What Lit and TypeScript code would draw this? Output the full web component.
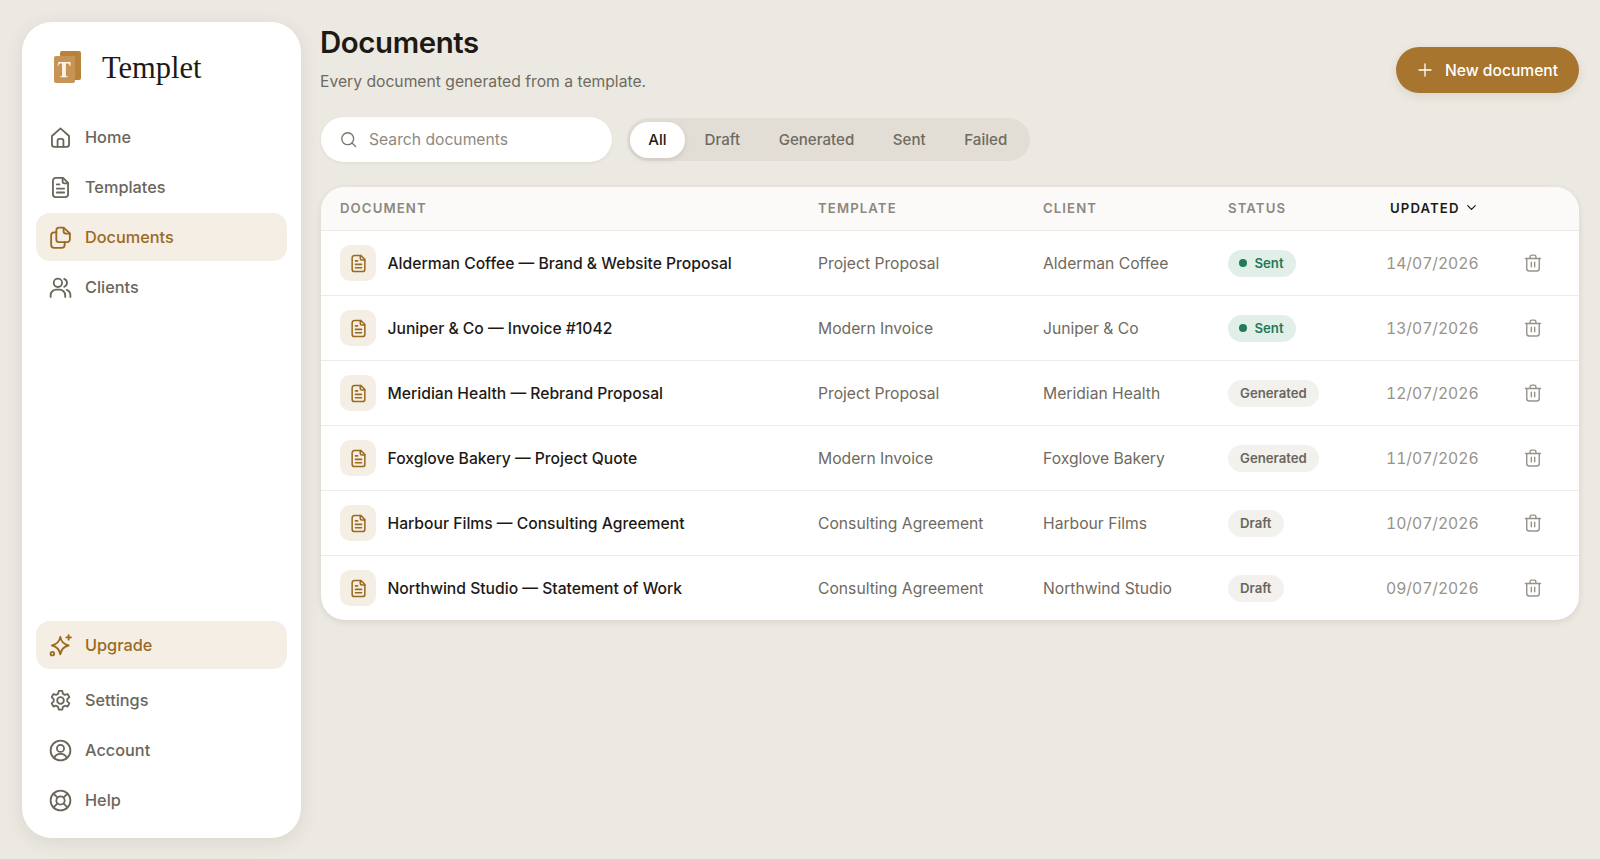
import { LitElement, html, css, svg } from 'lit';
import { customElement } from 'lit/decorators.js';

const icon = (body: unknown) => html`<svg class="ic" viewBox="0 0 24 24" fill="none" stroke="currentColor" stroke-width="1.75" stroke-linecap="round" stroke-linejoin="round">${body}</svg>`;

const icons = {
  home: svg`<path d="M3.800 10.600 12 3.200l8.200 7.400v8.100a2.300 2.300 0 0 1-2.300 2.300H6.100a2.300 2.300 0 0 1-2.300-2.300z"/><path d="M9.200 21v-6a1.600 1.600 0 0 1 1.600-1.600h2.400a1.600 1.600 0 0 1 1.600 1.600v6"/>`,
  doc: svg`<path d="M14.500 2.750H7.500A2.750 2.750 0 0 0 4.750 5.500v13a2.750 2.750 0 0 0 2.750 2.750h9a2.750 2.750 0 0 0 2.750-2.750V7.500z"/><path d="M14 3v3a2 2 0 0 0 2 2h3.200"/><path d="M8.500 9h2.500M8.500 13h7M8.500 16.800h7"/>`,
  docs: svg`<path d="M8 14V5a2.500 2.500 0 0 1 2.500-2.500H15L21 8v6a2.500 2.500 0 0 1-2.500 2.500h-8A2.500 2.500 0 0 1 8 14z"/><path d="M15 2.700V6a2.200 2.200 0 0 0 2.200 2.200H21"/><path d="M8 7H6a3 3 0 0 0-3 3v9a3 3 0 0 0 3 3h7a3 3 0 0 0 3-3v-2.500"/>`,
  clients: svg`<circle cx="9.500" cy="7.500" r="4"/><path d="M2.500 21v-1.500a5.500 5.500 0 0 1 5.500-5.500h3a5.500 5.500 0 0 1 5.500 5.500V21"/><path d="M15.500 3.700a4 4 0 0 1 0 7.600"/><path d="M18 14.300a5.500 5.500 0 0 1 3.500 5.200V21"/>`,
  spark: svg`<path d="M11.800 3.800c.9 5 3 7.200 8 8.200-5 1-7.100 3.200-8 8.400-.9-5.200-3-7.400-8-8.400 5-1 7.100-3.200 8-8.200z"/><path d="M19.800 2v4.400M17.600 4.200H22"/><circle cx="4.200" cy="19.800" r="1.700"/>`,
  gear: svg`<path d="M10.300 2.800h3.400l.6 2.700 1.900 1.100 2.600-.8 1.700 3-2 1.900v2.200l2 1.900-1.700 3-2.600-.8-1.900 1.100-.6 2.700h-3.400l-.6-2.700-1.900-1.100-2.600.8-1.700-3 2-1.900v-2.200l-2-1.900 1.700-3 2.600.8 1.900-1.100z"/><circle cx="12" cy="12" r="3.200"/>`,
  account: svg`<circle cx="12" cy="12" r="9.500"/><circle cx="12" cy="10" r="3.400"/><path d="M6 19.200c.8-2.600 3-4 6-4s5.200 1.400 6 4"/>`,
  help: svg`<circle cx="12" cy="12" r="9.500"/><circle cx="12" cy="12" r="4"/><path d="m5.300 5.300 3.900 3.900M14.800 14.800l3.900 3.900M18.700 5.300l-3.900 3.900M9.200 14.800l-3.900 3.900"/>`,
  search: svg`<circle cx="11" cy="11" r="7.500"/><path d="m16.500 16.500 4.500 4.500"/>`,
  plus: svg`<path d="M12 4v16M4 12h16"/>`,
  chevron: svg`<path d="m6 9 6 6 6-6"/>`,
  trash: svg`<path d="M3 6.500h18"/><path d="M8.500 6.500V4.500A2 2 0 0 1 10.500 2.500h3a2 2 0 0 1 2 2v2"/><path d="M4.500 6.500v12a3 3 0 0 0 3 3h9a3 3 0 0 0 3-3v-12"/><path d="M10 11v5.500M14 11v5.500"/>`,
};

const rows = [
  ['Alderman Coffee — Brand & Website Proposal', 'Project Proposal', 'Alderman Coffee', 'Sent', '14/07/2026'],
  ['Juniper & Co — Invoice #1042', 'Modern Invoice', 'Juniper & Co', 'Sent', '13/07/2026'],
  ['Meridian Health — Rebrand Proposal', 'Project Proposal', 'Meridian Health', 'Generated', '12/07/2026'],
  ['Foxglove Bakery — Project Quote', 'Modern Invoice', 'Foxglove Bakery', 'Generated', '11/07/2026'],
  ['Harbour Films — Consulting Agreement', 'Consulting Agreement', 'Harbour Films', 'Draft', '10/07/2026'],
  ['Northwind Studio — Statement of Work', 'Consulting Agreement', 'Northwind Studio', 'Draft', '09/07/2026'],
];

@customElement('app-root')
export class AppRoot extends LitElement {
  static styles = css`
    :host {
      display: flex;
      gap: 19px;
      box-sizing: border-box;
      width: 1600px;
      height: 859px;
      padding: 22px 21px 21px 22px;
      background: #ece9e2;
      font-family: Inter, sans-serif;
      color: #1d1a16;
      overflow: hidden;
    }
    .ic { width: 25px; height: 25px; flex: none; }

    .sidebar {
      width: 279px;
      flex: none;
      display: flex;
      flex-direction: column;
      box-sizing: border-box;
      padding: 0 14px;
      background: #fff;
      border-radius: 30px;
      box-shadow: 0 4px 18px rgba(70, 60, 40, 0.1);
    }
    .logo { display: flex; align-items: center; gap: 21px; height: 90px; padding-left: 18px; }
    .logo svg { width: 27px; height: 32px; flex: none; }
    .logo-name { font-family: 'Liberation Serif', serif; font-size: 30.5px; margin-top: 2px; color: #1d1a16; }
    .nav { display: flex; flex-direction: column; gap: 2px; padding-top: 1px; flex: 1; }
    .foot { display: flex; flex-direction: column; gap: 2px; padding-bottom: 14px; }
    .item {
      display: flex;
      align-items: center;
      gap: 12.5px;
      height: 48px;
      padding-left: 11.5px;
      border-radius: 14px;
      font-size: 16.3px;
      font-weight: 500;
      color: #6b665c;
    }
    .item.on { background: #f5eee4; color: #9a6a22; }
    .item.up { margin-bottom: 5px; }

    .main { flex: 1; min-width: 0; display: flex; flex-direction: column; }
    .top { display: flex; justify-content: space-between; height: 95px; }
    h1 { margin: 1px 0 0; font-size: 29.4px; font-weight: 600; line-height: 40px; letter-spacing: -0.4px; }
    .sub { margin: 9px 0 0; font-size: 15.68px; line-height: 20px; color: #6f6a60; }
    .new {
      display: flex;
      align-items: center;
      gap: 11px;
      height: 46px;
      margin-top: 25px;
      padding: 0 21px 0 20px;
      border-radius: 23px;
      background: #a8752e;
      color: #fff;
      font-size: 15.6px;
      font-weight: 500;
      box-shadow: 0 3px 10px rgba(90, 70, 30, 0.12);
    }
    .new .ic { width: 18px; height: 18px; }

    .filters { display: flex; align-items: center; gap: 15px; height: 45px; margin-left: 1px; }
    .search {
      display: flex;
      align-items: center;
      gap: 11px;
      box-sizing: border-box;
      width: 291px;
      height: 45px;
      padding-left: 18px;
      border-radius: 23px;
      background: #fff;
      box-shadow: 0 1px 3px rgba(70, 60, 40, 0.08);
      font-size: 15.68px;
      color: #8f8a80;
    }
    .search .ic { width: 19px; height: 19px; color: #7c776d; }
    .tabs {
      display: flex;
      align-items: center;
      box-sizing: border-box;
      height: 43px;
      padding: 0 3px;
      border-radius: 22px;
      background: #e2ded6;
      font-size: 15.1px;
      font-weight: 500;
      color: #6f6a60;
    }
    .tab { padding: 0 19.3px; line-height: 36px; }
    .tab.on {
      padding: 0 18.2px;
      margin-right: 0.5px;
      background: #fff;
      color: #1d1a16;
      border-radius: 18px;
      box-shadow: 0 2px 5px rgba(70, 60, 40, 0.14);
    }

    .table {
      margin: 25px 0 0 1px;
      background: #fff;
      border-radius: 24px;
      overflow: hidden;
      box-shadow: 0 2px 6px rgba(70, 60, 40, 0.12);
    }
    .row {
      display: grid;
      grid-template-columns: 478px 225px 185px 158px 137px 1fr;
      align-items: center;
      height: 65px;
      padding-left: 19px;
      box-sizing: border-box;
      border-top: 1px solid #eeebe6;
      font-size: 15.68px;
      color: #6f6a60;
    }
    .row.head {
      height: 44px;
      padding-bottom: 2px;
      border-top: 0;
      border-bottom: 1px solid #eeebe6;
      background: #fbfaf8;
      font-size: 13.2px;
      font-weight: 600;
      letter-spacing: 1.1px;
      color: #8d887e;
    }
    .row.head + .row { border-top: 0; height: 64px; }
    .sort { display: flex; align-items: center; gap: 4px; padding-left: 4px; color: #1d1a16; }
    .sort .ic { width: 15px; height: 15px; stroke-width: 2; }
    .doc { display: flex; align-items: center; gap: 11.5px; color: #1d1a16; font-weight: 500; }
    .doc-ic {
      display: grid;
      place-items: center;
      width: 36px;
      height: 36px;
      border-radius: 10px;
      background: #f5eee4;
      color: #9a6a22;
    }
    .doc-ic .ic { width: 21px; height: 21px; }
    .pill {
      display: inline-flex;
      align-items: center;
      gap: 7.5px;
      height: 27px;
      padding: 0 12px;
      border-radius: 14px;
      background: #f2f1ee;
      color: #6b665c;
      font-size: 13.2px;
      font-weight: 600;
    }
    .pill.sent { padding-left: 11px; background: #e2efe9; color: #217a58; }
    .dot { width: 8px; height: 8px; border-radius: 50%; background: #217a58; }
    .date { color: #98938a; font-variant-numeric: tabular-nums; }
    .trash { color: #98938a; display: flex; }
    .trash .ic { width: 20px; height: 20px; stroke-width: 1.7; }
  `;

  private nav(name: string, ic: unknown, cls = '') {
    return html`<div class="item ${cls}">${icon(ic)}<span>${name}</span></div>`;
  }

  render() {
    return html`
      <aside class="sidebar">
        <div class="logo">
          <svg viewBox="0 0 27 32">
            <rect x="6" y="0" width="21" height="29" rx="2" fill="#b88339"/>
            <rect x="0" y="5" width="21" height="27" rx="2" fill="#c79455"/>
            <path d="M4.500 11h12v4h-.8c-.3-2-1-2.500-3-2.500h-.8V25l1.800.5v.7H6.300v-.7l1.800-.5V12.500h-.8c-2 0-2.700.5-3 2.500h-.8z" fill="#fbf3e6"/>
          </svg>
          <span class="logo-name">Templet</span>
        </div>
        <nav class="nav">
          ${this.nav('Home', icons.home)}
          ${this.nav('Templates', icons.doc)}
          ${this.nav('Documents', icons.docs, 'on')}
          ${this.nav('Clients', icons.clients)}
        </nav>
        <div class="foot">
          ${this.nav('Upgrade', icons.spark, 'on up')}
          ${this.nav('Settings', icons.gear)}
          ${this.nav('Account', icons.account)}
          ${this.nav('Help', icons.help)}
        </div>
      </aside>
      <main class="main">
        <div class="top">
          <div>
            <h1>Documents</h1>
            <p class="sub">Every document generated from a template.</p>
          </div>
          <div class="new">${icon(icons.plus)}<span>New document</span></div>
        </div>
        <div class="filters">
          <div class="search">${icon(icons.search)}<span>Search documents</span></div>
          <div class="tabs">
            ${['All', 'Draft', 'Generated', 'Sent', 'Failed'].map((t, i) => html`<span class="tab ${i === 0 ? 'on' : ''}">${t}</span>`)}
          </div>
        </div>
        <div class="table">
          <div class="row head">
            <span>DOCUMENT</span><span>TEMPLATE</span><span>CLIENT</span><span>STATUS</span>
            <span class="sort">UPDATED ${icon(icons.chevron)}</span><span></span>
          </div>
          ${rows.map(r => html`
            <div class="row">
              <div class="doc"><span class="doc-ic">${icon(icons.doc)}</span><span>${r[0]}</span></div>
              <span>${r[1]}</span>
              <span>${r[2]}</span>
              <span>
                <span class="pill ${r[3] === 'Sent' ? 'sent' : ''}">${r[3] === 'Sent' ? html`<i class="dot"></i>` : ''}${r[3]}</span>
              </span>
              <span class="date">${r[4]}</span>
              <span class="trash">${icon(icons.trash)}</span>
            </div>
          `)}
        </div>
      </main>
    `;
  }
}
